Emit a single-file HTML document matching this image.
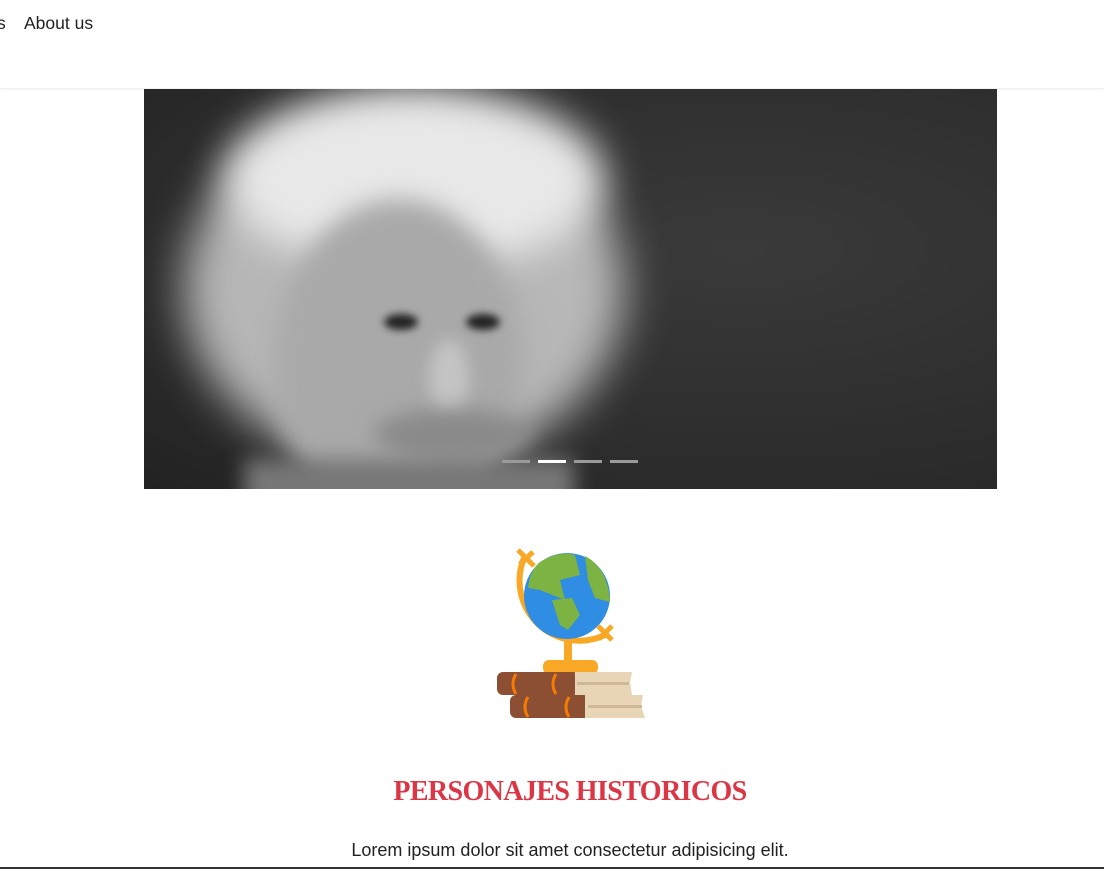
<!DOCTYPE html>
<html><head><meta charset="utf-8"><style>
html,body{margin:0;padding:0;background:#fff;width:1104px;height:869px;overflow:hidden;font-family:"Liberation Sans",sans-serif}
.nav{position:absolute;left:0;top:0;width:1104px;height:88px;background:#fff;box-shadow:0 1px 3px rgba(0,0,0,.06);border-bottom:1px solid #f1f1f1}
.nav span{position:absolute;top:13px;font-size:17.5px;color:#222}
.hero{position:absolute;left:144px;top:89px;width:853px;height:400px;background:radial-gradient(ellipse at 70% 40%,#3a3a3a,#2b2b2b 70%,#222);overflow:hidden}
.b{position:absolute;border-radius:50%}
.ind{position:absolute;top:460px;height:3px;width:28px;background:#9a9a9a}
h1{position:absolute;top:776px;left:0;width:1140px;text-align:center;margin:0;font-family:"Liberation Serif",serif;font-weight:bold;font-size:28px;color:#dc3545;letter-spacing:-0.6px}
p{position:absolute;top:840px;left:0;width:1140px;text-align:center;margin:0;font-size:18px;color:#222}
.line{position:absolute;left:0;top:867px;width:1104px;height:2px;background:#333}
</style></head><body>
<div class="nav"><span style="left:-3px">s</span><span style="left:24px">About us</span></div>
<div class="hero">
 <div class="b" style="left:40px;top:20px;width:440px;height:360px;background:#cfcfcf;filter:blur(22px);opacity:.85"></div>
 <div class="b" style="left:80px;top:0px;width:380px;height:180px;background:#e8e8e8;filter:blur(20px)"></div>
 <div class="b" style="left:130px;top:110px;width:250px;height:330px;background:#a9a9a9;filter:blur(12px)"></div>
 <div class="b" style="left:240px;top:225px;width:34px;height:16px;background:#222;filter:blur(4px)"></div>
 <div class="b" style="left:322px;top:225px;width:34px;height:16px;background:#222;filter:blur(4px)"></div>
 <div class="b" style="left:285px;top:250px;width:40px;height:80px;background:#c4c4c4;filter:blur(8px)"></div>
 <div class="b" style="left:230px;top:320px;width:160px;height:50px;background:#8a8a8a;filter:blur(10px)"></div>
 <div style="position:absolute;left:100px;top:370px;width:330px;height:60px;background:#777;filter:blur(10px)"></div>
</div>
<div class="ind" style="left:502px"></div><div class="ind" style="left:538px;background:#fff"></div><div class="ind" style="left:574px"></div><div class="ind" style="left:610px"></div>
<svg style="position:absolute;left:480px;top:540px" width="180" height="190" viewBox="0 0 180 190">
 <path d="M44 18 A60 60 0 0 0 125 95" fill="none" stroke="#f9a825" stroke-width="6"/>
 <path d="M38 10 L54 26 M53 12 L40 24 M118 86 L132 100 M132 86 L119 99" stroke="#f9a825" stroke-width="5"/>
 <circle cx="87" cy="56" r="43" fill="#2f8de4"/>
 <path d="M60 22 Q80 10 95 15 L100 35 L80 40 L85 60 L60 50 L48 48 Q50 30 60 22Z" fill="#7cb342"/>
 <path d="M72 60 L92 58 L100 75 L88 90 L80 85Z" fill="#7cb342"/>
 <path d="M105 16 Q128 28 130 62 L115 58 L108 40Z" fill="#7cb342"/>
 <rect x="84" y="102" width="8" height="20" fill="#f9a825"/>
 <rect x="63" y="120" width="55" height="14" rx="6" fill="#f9a825"/>
 <rect x="17" y="132" width="82" height="23" rx="6" fill="#8d4f33"/>
 <path d="M95 132 H152 L150 142 L152 155 H95Z" fill="#e8d5b5"/>
 <rect x="97" y="142" width="52" height="3" fill="#cdb995"/>
 <rect x="30" y="155" width="80" height="23" rx="6" fill="#8d4f33"/>
 <path d="M105 155 H163 L161 166 L165 178 H105Z" fill="#e8d5b5"/>
 <rect x="108" y="165" width="54" height="3" fill="#cdb995"/>
 <path d="M36 134 Q30 144 36 154 M76 134 Q70 144 76 154 M48 157 Q42 167 48 177 M89 157 Q83 167 89 177" fill="none" stroke="#f57c00" stroke-width="3"/>
</svg>
<h1>PERSONAJES HISTORICOS</h1>
<p>Lorem ipsum dolor sit amet consectetur adipisicing elit.</p>
<div class="line"></div>
</body></html>
